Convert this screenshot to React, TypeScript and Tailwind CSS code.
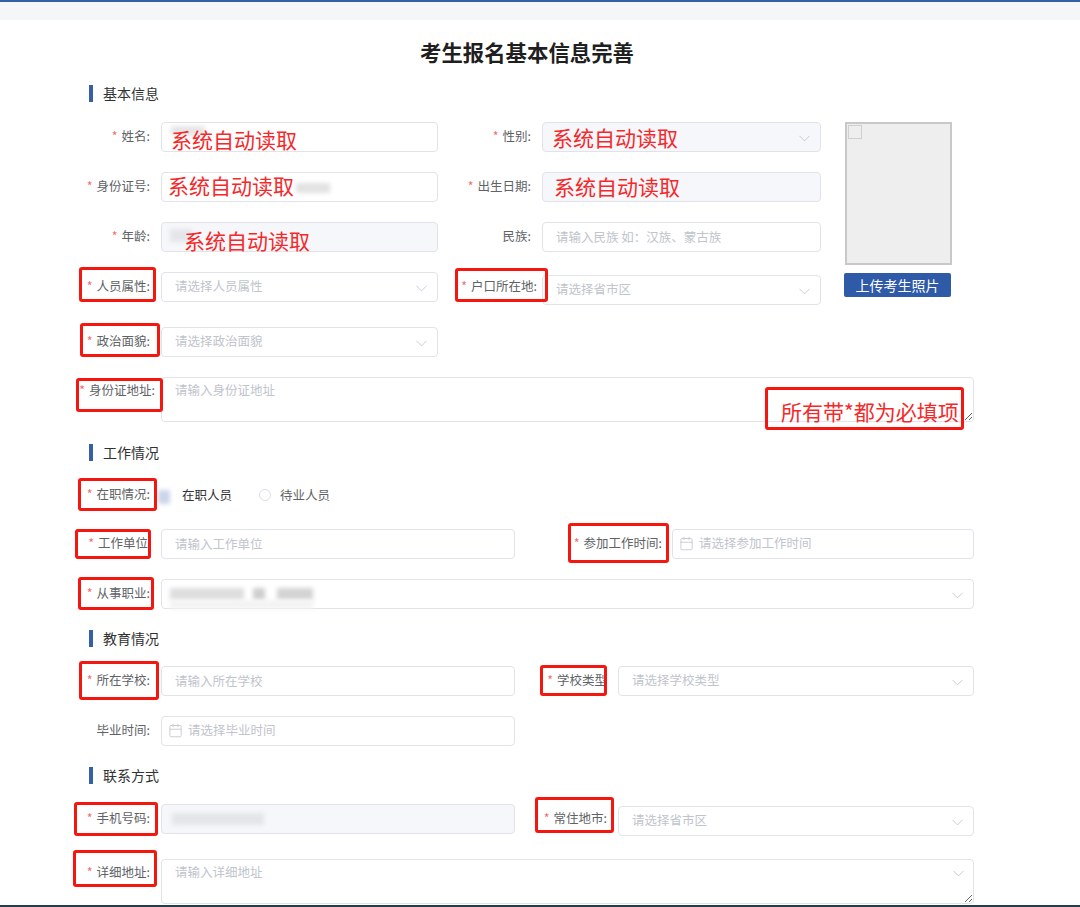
import { Calendar, ChevronDown } from 'lucide-react';
import type { ReactNode } from 'react';

const FONT = 'font-["Noto_Sans_CJK_SC","Noto_Sans",sans-serif]';

// red boxes drawn over the form by whoever annotated the screenshot
const RED_BOXES = [
  'left-[79px] top-[267px] w-[77px] h-[35px]',
  'left-[455px] top-[268px] w-[93px] h-[34px]',
  'left-[80px] top-[323px] w-[80px] h-[34px]',
  'left-[76px] top-[378px] w-[87px] h-[34px]',
  'left-[78px] top-[478px] w-[79px] h-[33px]',
  'left-[75px] top-[529px] w-[76px] h-[30px]',
  'left-[78px] top-[577px] w-[76px] h-[33px]',
  'left-[568px] top-[523px] w-[101px] h-[40px]',
  'left-[765px] top-[387px] w-[199px] h-[43px]',
  'left-[79px] top-[661px] w-[80px] h-[39px]',
  'left-[540px] top-[665px] w-[67px] h-[31px]',
  'left-[74px] top-[802px] w-[84px] h-[34px]',
  'left-[73px] top-[850px] w-[84px] h-[37px]',
  'left-[535px] top-[797px] w-[79px] h-[36px]',
];

const RED_NOTES = [
  'left-[171px] top-[124px]',
  'left-[168px] top-[170px]',
  'left-[184px] top-[225px]',
  'left-[552px] top-[122px]',
  'left-[554px] top-[171px]',
];

// mosaic / blur patches hiding personal data
const BLURS = [
  'left-[171px] top-[126px] w-[34px] h-[10px] bg-[#e6e6e8]',
  'left-[296px] top-[183px] w-[34px] h-[10px] bg-[#e2e2e2]',
  'left-[170px] top-[229px] w-[22px] h-[13px] bg-[#e6e6ea]',
  'left-[170px] top-[588px] w-[74px] h-[12px] bg-[#dedede]',
  'left-[253px] top-[588px] w-[12px] h-[12px] bg-[#cfcfcf]',
  'left-[277px] top-[588px] w-[36px] h-[12px] bg-[#d4d4d4]',
  'left-[170px] top-[600px] w-[143px] h-[9px] bg-[#f3f3f3]',
  'left-[172px] top-[813px] w-[92px] h-[12px] bg-[#e4e5e8]',
  'left-[158px] top-[490px] w-[12px] h-[14px] bg-[#ccd6ea]',
];

function SectionTitle({ title, className }: { title: string; className: string }) {
  return (
    <div className={`flex h-[17px] items-center pl-[89px] ${className}`}>
      <span className="h-[17px] w-[4px] bg-[#3560a8]" />
      <span className="ml-[10px] text-[14px] text-[#303133]">{title}</span>
    </div>
  );
}

function Label({ text, required = true, className }: { text: string; required?: boolean; className: string }) {
  return (
    <div className={`flex shrink-0 items-center justify-end pb-[2px] text-[12.5px] text-[#606266] ${className}`}>
      {required && <span className="mr-[4px] text-[#f56c6c]">*</span>}
      {text}
    </div>
  );
}

function TextInput({ placeholder, disabled, className }: { placeholder?: string; disabled?: boolean; className: string }) {
  return (
    <input
      placeholder={placeholder}
      disabled={disabled}
      className={`h-[30px] rounded-[4px] border border-[#e1e3e8] pb-[2px] pl-[13px] pr-[13px] text-[12.5px] outline-none placeholder:text-[#c0c4cc] ${
        disabled ? 'bg-[#f5f7fa]' : 'bg-white'
      } ${className}`}
    />
  );
}

function Select({ placeholder, disabled, className }: { placeholder?: string; disabled?: boolean; className: string }) {
  return (
    <div
      className={`flex h-[30px] items-center justify-between rounded-[4px] border border-[#e1e3e8] pb-[2px] pl-[13px] pr-[6px] text-[12.5px] text-[#c0c4cc] ${
        disabled ? 'bg-[#f5f7fa]' : 'bg-white'
      } ${className}`}
    >
      <span>{placeholder}</span>
      <ChevronDown size={19} strokeWidth={1.1} className="mt-[4px]" />
    </div>
  );
}

function DateInput({ placeholder, className }: { placeholder: string; className: string }) {
  return (
    <div
      className={`flex h-[30px] items-center rounded-[4px] border border-[#e1e3e8] bg-white pb-[2px] pl-[6px] text-[12.5px] text-[#c0c4cc] ${className}`}
    >
      <Calendar size={15} strokeWidth={1.3} />
      <span className="ml-[5px]">{placeholder}</span>
    </div>
  );
}

function TextArea({ placeholder, className, children }: { placeholder: string; className: string; children?: ReactNode }) {
  return (
    <div className={`relative h-[45px] w-[813px] ${className}`}>
      <textarea
        placeholder={placeholder}
        className="block h-[45px] w-[813px] resize-y rounded-[4px] border border-[#e1e3e8] bg-white px-[13px] py-[3px] text-[12.5px] outline-none placeholder:text-[#c0c4cc]"
      />
      {children}
    </div>
  );
}

export default function App() {
  return (
    <div className={`relative flex h-[907px] w-[1080px] flex-col overflow-hidden bg-white ${FONT}`}>
      <div className="h-[2px] shrink-0 bg-[#3560a8]" />
      <div className="h-[18px] shrink-0 bg-[#f5f6f7]" />

      <h1 className="mt-[17px] h-[30px] pr-[26px] text-center text-[21.4px] font-bold leading-[30px] text-[#1f1f1f]">
        考生报名基本信息完善
      </h1>

      <SectionTitle title="基本信息" className="mt-[18px]" />

      <div className="mt-[20px] flex items-start">
        <div className="flex w-[821px] flex-col gap-[20px]">
          <div className="flex">
            <Label text="姓名:" className="w-[150px]" />
            <TextInput className="ml-[11px] w-[277px]" />
            <Label text="性别:" className="w-[93px]" />
            <Select disabled className="ml-[11px] w-[279px]" />
          </div>
          <div className="flex">
            <Label text="身份证号:" className="w-[150px]" />
            <TextInput className="ml-[11px] w-[277px]" />
            <Label text="出生日期:" className="w-[93px]" />
            <TextInput disabled className="ml-[11px] w-[279px]" />
          </div>
          <div className="flex">
            <Label text="年龄:" className="w-[150px]" />
            <TextInput disabled className="ml-[11px] w-[277px]" />
            <Label text="民族:" required={false} className="w-[93px]" />
            <TextInput placeholder={'请输入民族 如\uFF1A汉族、蒙古族'} className="ml-[11px] w-[279px]" />
          </div>
          <div className="flex items-start">
            <Label text="人员属性:" className="h-[30px] w-[150px]" />
            <Select placeholder="请选择人员属性" className="ml-[11px] w-[277px]" />
            <Label text="户口所在地:" className="h-[30px] w-[99px]" />
            <Select placeholder="请选择省市区" className="ml-[5px] mt-[3px] w-[279px]" />
          </div>
          <div className="mt-[2px] flex">
            <Label text="政治面貌:" className="w-[150px]" />
            <Select placeholder="请选择政治面貌" className="ml-[11px] w-[277px]" />
          </div>
        </div>

        <div className="ml-[23px] flex w-[108px] flex-col">
          <div className="ml-[1px] h-[143px] w-[107px] border-2 border-[#c8c8c8] bg-[#eeeeee] p-[1px]">
            <div className="h-[14px] w-[14px] border border-[#cfcfcf]" />
          </div>
          <button className="mt-[8px] h-[24px] w-[107px] rounded-[2px] bg-[#2f5aa8] text-[14px] text-white">
            上传考生照片
          </button>
        </div>
      </div>

      <div className="mt-[20px] flex items-start">
        <Label text="身份证地址:" className="h-[28px] w-[155px]" />
        <TextArea placeholder="请输入身份证地址" className="ml-[6px]" />
      </div>

      <SectionTitle title="工作情况" className="mt-[22px]" />

      <div className="mt-[19px] flex h-[30px] items-center">
        <Label text="在职情况:" className="w-[150px]" />
        <span className="ml-[32px] text-[12.5px] text-[#303133]">在职人员</span>
        <span className="ml-[27px] h-[12px] w-[12px] rounded-full border border-[#dcdfe6]" />
        <span className="ml-[9px] text-[12.5px] text-[#606266]">待业人员</span>
      </div>

      <div className="mt-[19px] flex">
        <Label text="工作单位" className="w-[148px]" />
        <TextInput placeholder="请输入工作单位" className="ml-[13px] w-[354px]" />
        <Label text="参加工作时间:" className="w-[147px]" />
        <DateInput placeholder="请选择参加工作时间" className="ml-[10px] w-[302px]" />
      </div>

      <div className="mt-[20px] flex">
        <Label text="从事职业:" className="w-[150px]" />
        <Select className="ml-[11px] w-[813px]" />
      </div>

      <SectionTitle title="教育情况" className="mt-[21px]" />

      <div className="mt-[19px] flex">
        <Label text="所在学校:" className="w-[150px]" />
        <TextInput placeholder="请输入所在学校" className="ml-[11px] w-[354px]" />
        <Label text="学校类型" className="w-[92px]" />
        <Select placeholder="请选择学校类型" className="ml-[11px] w-[356px]" />
      </div>

      <div className="mt-[20px] flex">
        <Label text="毕业时间:" required={false} className="w-[150px]" />
        <DateInput placeholder="请选择毕业时间" className="ml-[11px] w-[354px]" />
      </div>

      <SectionTitle title="联系方式" className="mt-[21px]" />

      <div className="mt-[20px] flex items-start">
        <Label text="手机号码:" className="h-[30px] w-[150px]" />
        <TextInput disabled className="ml-[11px] w-[354px]" />
        <Label text="常住地市:" className="h-[30px] w-[92px]" />
        <Select placeholder="请选择省市区" className="ml-[11px] mt-[2px] w-[356px]" />
      </div>

      <div className="mt-[23px] flex items-start">
        <Label text="详细地址:" className="h-[28px] w-[150px]" />
        <TextArea placeholder="请输入详细地址" className="ml-[11px]">
          <ChevronDown size={19} strokeWidth={1.1} className="absolute right-[6px] top-[5px] text-[#c0c4cc]" />
        </TextArea>
      </div>

      <div className="absolute inset-x-0 bottom-0 h-[2px] bg-[#23404a]" />

      {BLURS.map((cls) => (
        <div key={cls} className={`absolute blur-[2px] ${cls}`} />
      ))}

      {RED_NOTES.map((cls) => (
        <div key={cls} className={`absolute text-[21px] leading-[30px] text-[#f5282a] ${cls}`}>
          系统自动读取
        </div>
      ))}

      {RED_BOXES.map((cls) => (
        <div key={cls} className={`absolute rounded-[3px] border-[3px] border-[#f5170f] ${cls}`} />
      ))}

      <div className="absolute left-[781px] top-[396px] text-[21px] leading-[30px] text-[#f5282a]">
        所有带*都为必填项
      </div>
    </div>
  );
}
